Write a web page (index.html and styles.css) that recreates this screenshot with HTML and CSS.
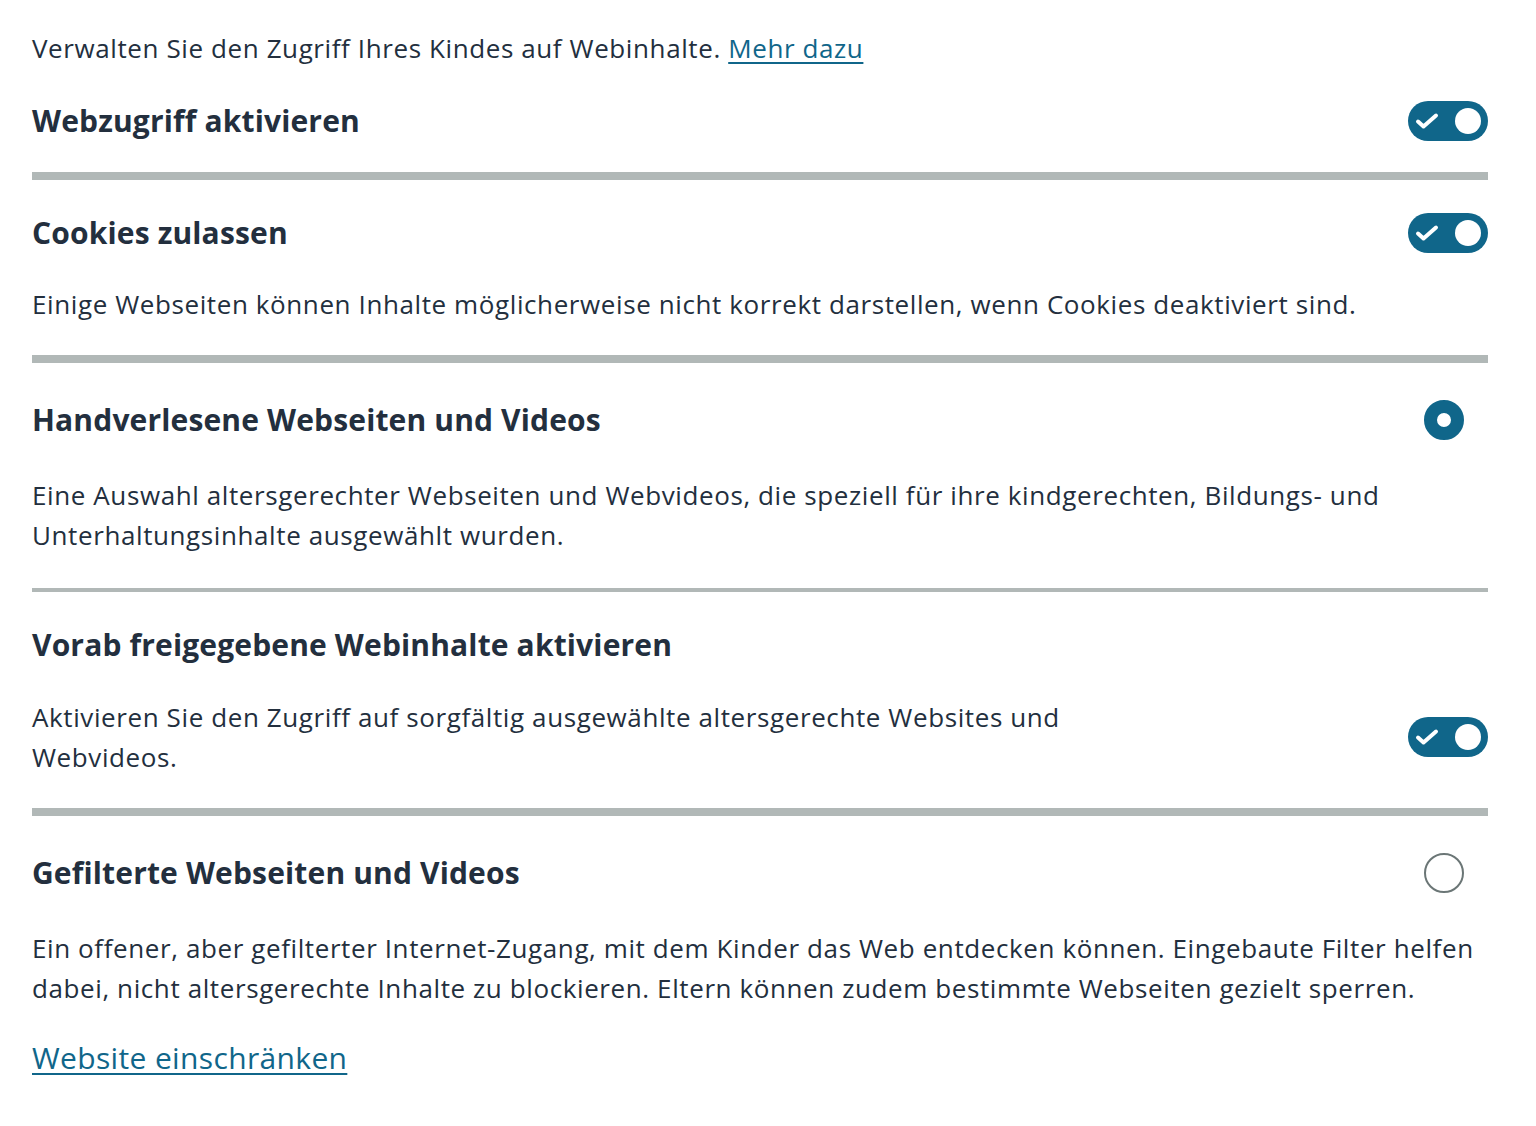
FILE: index.html
```html
<!DOCTYPE html>
<html lang="de">

<head>
    <meta charset="UTF-8">
    <title>Webzugriff</title>
    <link rel="stylesheet" href="styles.css">
</head>

<body>
    <div id="page">
        <section class="setting first">
            <p class="intro">Verwalten Sie den Zugriff Ihres Kindes auf Webinhalte. <a href="#">Mehr dazu</a></p>
            <div class="head">
                <h2>Webzugriff aktivieren</h2>
                <span class="toggle">
                    <svg viewBox="0 0 24 18" width="24" height="18"><path d="M3 9.5l5.5 5L21 3.5" /></svg>
                    <i></i>
                </span>
            </div>
        </section>
        <hr class="rule">

        <section class="setting">
            <div class="head">
                <h2>Cookies zulassen</h2>
                <span class="toggle">
                    <svg viewBox="0 0 24 18" width="24" height="18"><path d="M3 9.5l5.5 5L21 3.5" /></svg>
                    <i></i>
                </span>
            </div>
            <p class="desc">Einige Webseiten können Inhalte möglicherweise nicht korrekt darstellen, wenn Cookies deaktiviert sind.</p>
        </section>
        <hr class="rule">

        <section class="setting choice">
            <div class="head tall">
                <h2>Handverlesene Webseiten und Videos</h2>
                <span class="radio checked"></span>
            </div>
            <p class="desc">Eine Auswahl altersgerechter Webseiten und Webvideos, die speziell für ihre kindgerechten, Bildungs- und Unterhaltungsinhalte ausgewählt wurden.</p>
        </section>
        <hr class="rule thin">

        <section class="setting">
            <div class="head">
                <h2>Vorab freigegebene Webinhalte aktivieren</h2>
            </div>
            <div class="desc-row">
                <p class="desc narrow">Aktivieren Sie den Zugriff auf sorgfältig ausgewählte altersgerechte Websites und Webvideos.</p>
                <span class="toggle">
                    <svg viewBox="0 0 24 18" width="24" height="18"><path d="M3 9.5l5.5 5L21 3.5" /></svg>
                    <i></i>
                </span>
            </div>
        </section>
        <hr class="rule">

        <section class="setting">
            <div class="head tall">
                <h2>Gefilterte Webseiten und Videos</h2>
                <span class="radio"></span>
            </div>
            <p class="desc">Ein offener, aber gefilterter Internet-Zugang, mit dem Kinder das Web entdecken können. Eingebaute Filter helfen dabei, nicht altersgerechte Inhalte zu blockieren. Eltern können zudem bestimmte Webseiten gezielt sperren.</p>
            <a class="big-link" href="#">Website einschränken</a>
        </section>
    </div>
</body>

</html>
```

FILE: styles.css
```css
* {
    margin: 0;
    padding: 0;
    box-sizing: border-box;
}

body {
    font-family: "Open Sans", "Noto Sans", sans-serif;
    color: #232f3e;
    background: #fff;
}

#page {
    padding: 0 48px 0 32px;
}

a {
    color: #10668a;
    text-decoration: underline;
    text-underline-offset: 4px;
    text-decoration-thickness: 2px;
}

.setting {
    padding: 33px 0 31px;
}

.setting.first {
    padding-top: 28px;
}

.setting.choice {
    padding-bottom: 33px;
}

.intro {
    font-size: 26px;
    line-height: 40px;
    letter-spacing: 0.6px;
    margin-bottom: 33px;
}

.head {
    display: flex;
    align-items: center;
    justify-content: space-between;
    min-height: 40px;
}

.head.tall {
    min-height: 48px;
}

.head h2 {
    font-size: 30px;
    line-height: 40px;
    font-weight: 700;
    letter-spacing: 0.15px;
}

.desc {
    font-size: 26px;
    line-height: 40px;
    letter-spacing: 0.6px;
    margin-top: 31px;
}

.desc-row {
    display: flex;
    align-items: center;
    justify-content: space-between;
    margin-top: 32px;
}

.desc-row .desc {
    margin-top: 0;
}

.desc.narrow {
    max-width: 1100px;
}

.big-link {
    display: inline-block;
    font-size: 30px;
    line-height: 40px;
    letter-spacing: 0.35px;
    margin-top: 30px;
}

.rule {
    border: none;
    height: 8px;
    background: #b1b8b7;
}

.rule.thin {
    height: 4px;
}

.toggle {
    flex: none;
    width: 80px;
    height: 40px;
    border-radius: 20px;
    background: #10668a;
    display: flex;
    align-items: center;
    justify-content: space-between;
    padding: 0 7px 0 7px;
}

.toggle svg path {
    fill: none;
    stroke: #fff;
    stroke-width: 4;
    stroke-linecap: round;
    stroke-linejoin: round;
}

.toggle i {
    width: 26px;
    height: 26px;
    border-radius: 50%;
    background: #fff;
}

.radio {
    flex: none;
    width: 40px;
    height: 40px;
    border-radius: 50%;
    border: 2px solid #6b7676;
    margin-right: 24px;
}

.radio.checked {
    border: 13px solid #10668a;
    background: #fff;
}
```
